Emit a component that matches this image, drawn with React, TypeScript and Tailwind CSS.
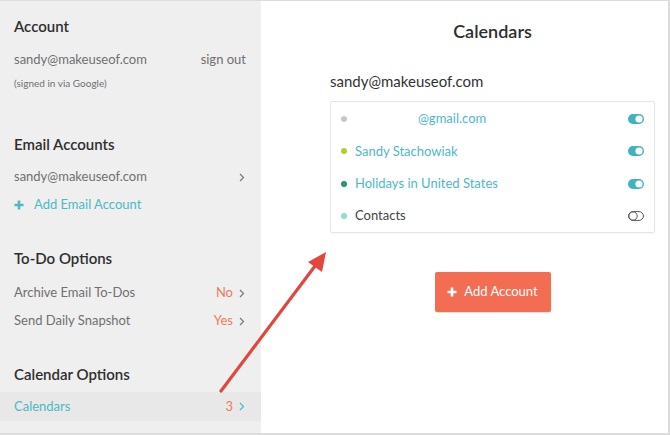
const teal = 'text-[#4cb9c4]'

const Chevron = ({ className = '' }: { className?: string }) => (
  <svg width="6" height="9" viewBox="0 0 6 9" className={className}>
    <path d="M1 1l3.5 3.5L1 8" fill="none" stroke="currentColor" strokeWidth="1.2" />
  </svg>
)

const Plus = ({ size = 10 }: { size?: number }) => (
  <svg width={size} height={size} viewBox="0 0 10 10">
    <path d="M5 0.5v9M0.5 5h9" stroke="currentColor" strokeWidth="2.6" />
  </svg>
)

const Toggle = ({ on }: { on: boolean }) =>
  on ? (
    <svg width="16" height="10" viewBox="0 0 16 10">
      <rect x="0" y="0" width="16" height="10" rx="5" fill="#3db4bf" />
      <circle cx="11" cy="5" r="3.6" fill="#fff" />
    </svg>
  ) : (
    <svg width="16" height="10" viewBox="0 0 16 10">
      <rect x="0.6" y="0.6" width="14.8" height="8.8" rx="4.4" fill="none" stroke="#555" strokeWidth="1" />
      <circle cx="5" cy="5" r="4.2" fill="none" stroke="#555" strokeWidth="1" />
    </svg>
  )

const calendars = [
  { name: '@gmail.com', dot: 'bg-[#c9c9c9]', color: teal, on: true, indent: true },
  { name: 'Sandy Stachowiak', dot: 'bg-[#b3cb35]', color: teal, on: true, indent: false },
  { name: 'Holidays in United States', dot: 'bg-[#1d9a6c]', color: teal, on: true, indent: false },
  { name: 'Contacts', dot: 'bg-[#92dccf]', color: 'text-[#444]', on: false, indent: false },
]

const Heading = ({ children, mt }: { children: string; mt: string }) => (
  <div className={`${mt} h-[20px] leading-[20px] text-[15px] font-semibold text-[#2e2e2e]`}>{children}</div>
)

export default function App() {
  return (
    <div
      className="relative w-[670px] h-[435px] overflow-hidden bg-white border-r-2 border-b-2 border-t border-[#dcdcdc] flex"
      style={{ fontFamily: 'Lato, "Open Sans", sans-serif' }}
    >
      {/* Sidebar */}
      <div className="w-[261px] h-full bg-[#efefef] pt-[15px] text-[13px]">
        <div className="px-[14px]">
          <Heading mt="mt-0">Account</Heading>
          <div className="mt-[14px] h-[20px] flex items-center justify-between text-[#707070]">
            <span>sandy@makeuseof.com</span>
            <span className="pr-[1px]">sign out</span>
          </div>
          <div className="mt-[6px] h-[14px] leading-[14px] text-[10px] text-[#707070]">(signed in via Google)</div>

          <Heading mt="mt-[44px]">Email Accounts</Heading>
          <div className="mt-[13px] h-[20px] flex items-center justify-between text-[#707070]">
            <span>sandy@makeuseof.com</span>
            <Chevron className="text-[#777] mr-[2px]" />
          </div>
          <div className={`mt-[8px] h-[20px] flex items-center gap-[10px] ${teal}`}>
            <Plus size={10} />
            <span>Add Email Account</span>
          </div>

          <Heading mt="mt-[33px]">To-Do Options</Heading>
          <div className="mt-[15px] h-[20px] flex items-center justify-between text-[#707070]">
            <span>Archive Email To-Dos</span>
            <span className="flex items-center gap-[6px] text-[#ee7b5f]">
              No <Chevron className="text-[#777] mr-[2px]" />
            </span>
          </div>
          <div className="mt-[8px] h-[20px] flex items-center justify-between text-[#707070]">
            <span>Send Daily Snapshot</span>
            <span className="flex items-center gap-[6px] text-[#ee7b5f]">
              Yes <Chevron className="text-[#777] mr-[2px]" />
            </span>
          </div>

          <Heading mt="mt-[33px]">Calendar Options</Heading>
        </div>
        <div className="mt-[8px] h-[29px] px-[14px] bg-[#e8e8e8] flex items-center justify-between">
          <span className={teal}>Calendars</span>
          <span className="flex items-center gap-[6px] text-[#ee7b5f]">
            3 <Chevron className="text-[#4cb9c4] mr-[2px]" />
          </span>
        </div>
      </div>

      {/* Main panel */}
      <div className="flex-1 pl-[69px] pr-[13px] pt-[19px]">
        <div className="h-[22px] leading-[22px] text-center text-[18px] font-semibold text-[#2e2e2e]">Calendars</div>
        <div className="mt-[29px] h-[20px] leading-[20px] text-[15px] text-[#333]">sandy@makeuseof.com</div>
        <div className="mt-[10px] border border-[#e6e6e6] rounded-[2px] pt-[1px] text-[13px] shadow-[0_1px_2px_rgba(0,0,0,0.04)]">
          {calendars.map((c) => (
            <div key={c.name} className="h-[32.25px] flex items-center pl-[10px] pr-[10px]">
              <span className={`w-[6px] h-[6px] rounded-full ${c.dot}`} />
              <span className={`${c.indent ? 'ml-[71px]' : 'ml-[8px]'} flex-1 ${c.color}`}>{c.name}</span>
              <Toggle on={c.on} />
            </div>
          ))}
        </div>
        <div className="mt-[39px] flex justify-center">
          <button className="w-[116px] h-[40px] bg-[#f26d51] rounded-[2px] text-white text-[13px] flex items-center justify-center gap-[7px] shadow-[0_1px_1px_rgba(0,0,0,0.12)]">
            <Plus size={10} />
            <span>Add Account</span>
          </button>
        </div>
      </div>

      {/* Annotation arrow */}
      <svg className="absolute left-0 top-0 pointer-events-none" width="670" height="435" viewBox="0 0 670 435">
        <line x1="221" y1="390" x2="318" y2="261" stroke="#e2463c" strokeWidth="3.2" strokeLinecap="round" />
        <polygon points="326,251 308,261 322,271" fill="#e2463c" />
      </svg>
    </div>
  )
}
